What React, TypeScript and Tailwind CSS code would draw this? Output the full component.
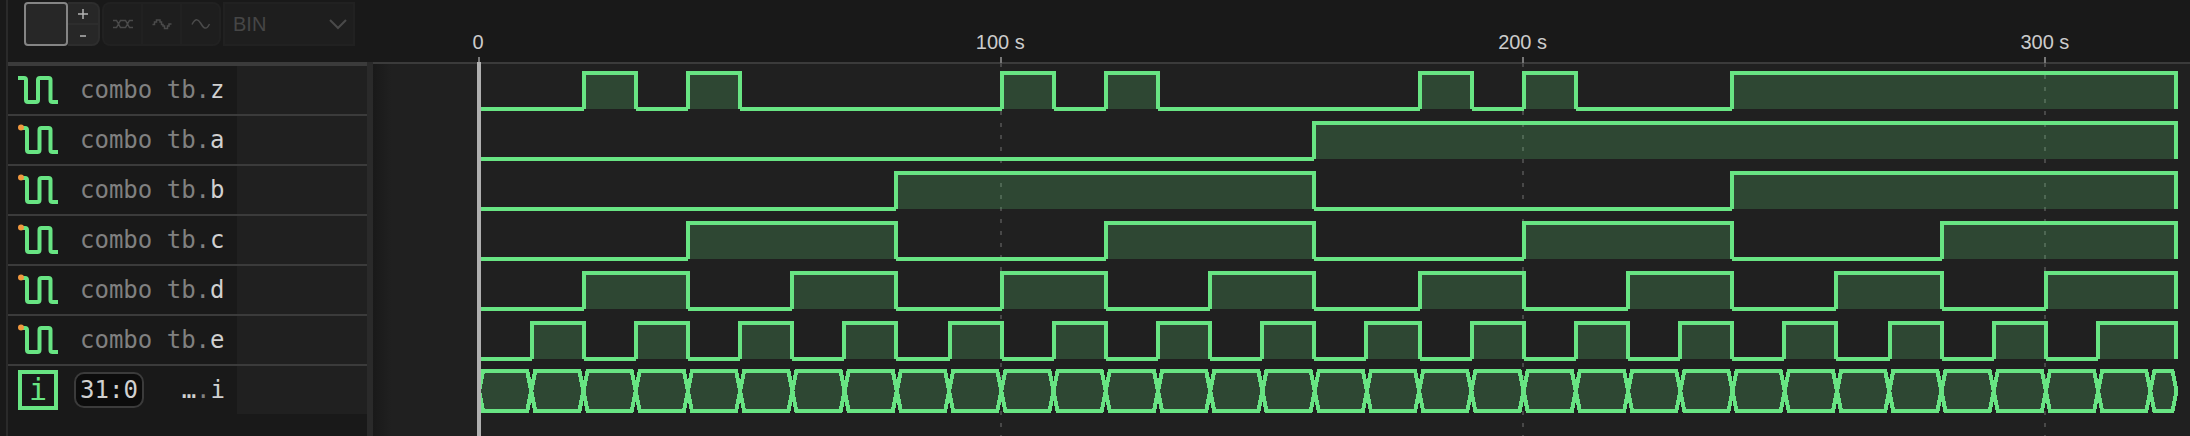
import React from "react";

const GREEN = "#68e483";
const END = 325;
const ROW = 50;
const SCALE = 5.223;
const ORIGIN = 106;

type Span = [number, number];
type Signal = { name: string; input: boolean; high: Span[] };

// Alternating low/high signal; the last high state holds until the end of the trace.
const every = (step: number): Span[] => {
  const out: Span[] = [];
  for (let t = step; t < 320; t += step * 2) out.push([t, t + step >= 320 ? END : t + step]);
  return out;
};

const signals: Signal[] = [
  {
    name: "z",
    input: false,
    high: [[20, 30], [40, 50], [100, 110], [120, 130], [180, 190], [200, 210], [240, END]],
  },
  { name: "a", input: true, high: every(160) },
  { name: "b", input: true, high: every(80) },
  { name: "c", input: true, high: every(40) },
  { name: "d", input: true, high: every(20) },
  { name: "e", input: true, high: every(10) },
];

// Time to pixels, snapped to a two-pixel grid.
const px = (t: number) => ORIGIN + 1 + Math.floor((SCALE * t) / 2) * 2;

function Wave({ high, top }: { high: Span[]; top: number }) {
  const bottom = top + 36;
  const lows: Span[] = [];
  let last = 0;
  for (const [a, b] of high) {
    lows.push([last, a]);
    last = b;
  }
  return (
    <g>
      {high.map(([a, b]) => (
        <g key={a}>
          <rect x={px(a)} y={top} width={px(b) - px(a)} height={36} fill={GREEN} fillOpacity={0.2} />
          <path
            d={`M${px(a)} ${bottom}V${top}H${px(b)}V${bottom}`}
            fill="none"
            stroke={GREEN}
            strokeWidth={4}
          />
        </g>
      ))}
      {lows.map(([a, b]) => (
        <path key={a} d={`M${px(a)} ${bottom}H${px(b)}`} stroke={GREEN} strokeWidth={4} />
      ))}
    </g>
  );
}

function Bus({ top }: { top: number }) {
  const cells: Span[] = [];
  for (let t = 0; t < END; t += 10) cells.push([t, Math.min(t + 10, END)]);
  const mid = top + 20;
  const bottom = top + 40;
  return (
    <g shapeRendering="crispEdges">
      {cells.map(([a, b]) => {
        const l = ORIGIN + SCALE * a;
        const r = ORIGIN + SCALE * b;
        return (
          <path
            key={a}
            d={`M${l} ${mid}L${l + 4} ${top}H${r - 4}L${r} ${mid}L${r - 4} ${bottom}H${l + 4}Z`}
            fill={GREEN}
            fillOpacity={0.2}
            stroke={GREEN}
            strokeWidth={4}
          />
        );
      })}
    </g>
  );
}

function SignalIcon({ input }: { input: boolean }) {
  return (
    <svg className="size-10 shrink-0" viewBox="0 0 40 40" aria-hidden="true">
      <path
        d={
          input
            ? "M3 8H7Q9 8 9 10V30Q9 32 11 32H19.500Q21.500 32 21.500 30V10Q21.500 8 23.500 8H30.500Q32.500 8 32.500 10V30Q32.500 32 34.500 32H40"
            : "M0 8H6Q8 8 8 10V30Q8 32 10 32H18Q20 32 20 30V10Q20 8 22 8H30.500Q32.500 8 32.500 10V30Q32.500 32 34.500 32H40"
        }
        fill="none"
        stroke={GREEN}
        strokeWidth="4"
      />
      {input && <circle cx="3" cy="7.500" r="3" fill="#f0983f" />}
    </svg>
  );
}

const drawing = { fill: "none", stroke: "currentColor", strokeWidth: 1.5 };

function Toolbar() {
  return (
    <div className="flex h-[62px] items-start gap-[2px] pt-[2px] pl-4">
      <div className="flex h-11">
        <button
          type="button"
          aria-label="Format"
          className="w-11 rounded border-2 border-[#858585] bg-[#272727]"
        />
        <div className="flex w-8 flex-col overflow-hidden rounded-r-lg border-2 border-l-0 border-[#2d2d2d] bg-[#272727] text-[#b4b4b4]">
          <button
            type="button"
            aria-label="Increase"
            className="flex flex-1 items-center justify-center border-b-2 border-[#2d2d2d]"
          >
            <svg className="size-3" viewBox="0 0 12 12" aria-hidden="true">
              <path d="M6 1V11M1 6H11" {...drawing} />
            </svg>
          </button>
          <button
            type="button"
            aria-label="Decrease"
            className="flex flex-1 items-center justify-center"
          >
            <svg className="size-3" viewBox="0 0 12 12" aria-hidden="true">
              <path d="M3 7H9" {...drawing} />
            </svg>
          </button>
        </div>
      </div>
      <div className="flex h-11 w-[119px] divide-x-2 divide-[#212121] rounded-lg border-2 border-[#212121] bg-[#1e1e1e] text-[#4a4a4a]">
        <button type="button" aria-label="Digital" className="flex flex-1 items-center justify-center">
          <svg className="h-3 w-5" viewBox="0 0 20 12" aria-hidden="true">
            <path
              d="M0 2.500H3.500L5.500 6L3.500 9.500H0M7.500 2.500H12.500L14.500 6L12.500 9.500H7.500L5.500 6ZM20 2.500H16.500L14.500 6L16.500 9.500H20"
              {...drawing}
            />
          </svg>
        </button>
        <button type="button" aria-label="Stepped" className="flex flex-1 items-center justify-center">
          <svg className="h-3 w-5" viewBox="0 0 20 12" aria-hidden="true">
            <path d="M0.500 6.500H2.500V4H4.500V2H8V4H9.500V6.500H11V8H12.500V10.500H15.500V8H17V6H19.500" {...drawing} />
          </svg>
        </button>
        <button type="button" aria-label="Linear" className="flex flex-1 items-center justify-center">
          <svg className="h-3 w-5" viewBox="0 0 20 12" aria-hidden="true">
            <path d="M1 6.500C4 1 6.500 0 9.500 5S15 13 18.500 6" {...drawing} />
          </svg>
        </button>
      </div>
      <div className="grid h-11 w-[132px] items-center">
        <select
          aria-label="Number format"
          className="col-start-1 row-start-1 h-full w-full appearance-none border-2 border-[#212121] bg-[#1e1e1e] pl-2 text-xl text-[#464646]"
        >
          <option>BIN</option>
        </select>
        <svg
          className="pointer-events-none col-start-1 row-start-1 mr-2 h-3 w-[18px] justify-self-end"
          viewBox="0 0 18 12"
          aria-hidden="true"
        >
          <path d="M1 2L9 10L17 2" fill="none" stroke="#4a4a4a" strokeWidth="2" />
        </svg>
      </div>
    </div>
  );
}

const rowClass =
  "flex items-center border-[#3b3b3b] font-['DejaVu_Sans_Mono',monospace] text-2xl text-[#808080]";

export default function App() {
  const ticks = [0, 100, 200, 300];
  return (
    <div className="flex h-screen min-h-96 overflow-hidden bg-[#191919] pl-[6px] font-['Liberation_Sans',sans-serif]">
      <aside className="flex w-[367px] shrink-0 flex-col border-l-2 border-[#2a2a2a]">
        <Toolbar />
        <div className="flex flex-1">
          <ul className="min-w-0 flex-1 border-t-4 border-[#3b3b3b]">
            {signals.map((s) => (
              <li key={s.name} className={`${rowClass} h-[50px] border-b-2`}>
                <div className="flex w-[229px] shrink-0 items-center gap-[22px] pl-[10px]">
                  <SignalIcon input={s.input} />
                  <span className="whitespace-pre">
                    combo tb.<span className="text-[#d0d0d0]">{s.name}</span>
                  </span>
                </div>
                <div className="h-full flex-1 bg-[#202020]" />
              </li>
            ))}
            <li className={`${rowClass} h-12`}>
              <div className="flex w-[229px] shrink-0 items-center gap-4 pr-3 pl-[10px]">
                <span className="flex size-10 shrink-0 items-center justify-center border-4 border-[#68e483] text-3xl leading-none text-[#68e483]">
                  i
                </span>
                <span className="flex h-9 w-[70px] items-center justify-center rounded-[10px] border-2 border-[#3b3b3b] bg-[#0c0c0c] text-[#d0d0d0]">
                  31:0
                </span>
                <span className="ml-auto text-[#d0d0d0]">
                  …<span className="text-[#808080]">.</span>i
                </span>
              </div>
              <div className="h-full flex-1 bg-[#202020]" />
            </li>
          </ul>
          <div className="w-[6px] bg-[#2a2a2a]" />
        </div>
      </aside>
      <main className="min-w-0 flex-1">
        <svg className="h-full w-full" role="img" aria-label="Signal waveforms">
          <defs>
            <linearGradient id="edge">
              <stop offset="0" stopColor="#191919" />
              <stop offset="1" stopColor="#202020" />
            </linearGradient>
          </defs>
          <rect x="0" y="64" width="100%" height="100%" fill="#202020" />
          <rect x="0" y="64" width="18" height="100%" fill="url(#edge)" />
          <rect x="0" y="62" width="100%" height="2" fill="#3b3b3b" />
          {ticks.map((t) => (
            <g key={t}>
              <text
                x={ORIGIN - 1 + SCALE * t}
                y="49"
                fill="#cccccc"
                textAnchor="middle"
                className="text-xl"
              >
                {t === 0 ? "0" : `${t} s`}
              </text>
              <rect x={px(t) - 2} y="57" width="2" height="6" fill="#777777" />
              {t > 0 && (
                <path
                  d={`M${px(t) - 1} 63V436`}
                  stroke="#484848"
                  strokeWidth="2"
                  strokeDasharray="4 8"
                />
              )}
            </g>
          ))}
          {signals.map((s, i) => (
            <Wave key={s.name} high={s.high} top={73 + ROW * i} />
          ))}
          <Bus top={371} />
          <rect x={ORIGIN - 2} y="62" width="4" height="100%" fill="#b0b0b0" />
        </svg>
      </main>
    </div>
  );
}
